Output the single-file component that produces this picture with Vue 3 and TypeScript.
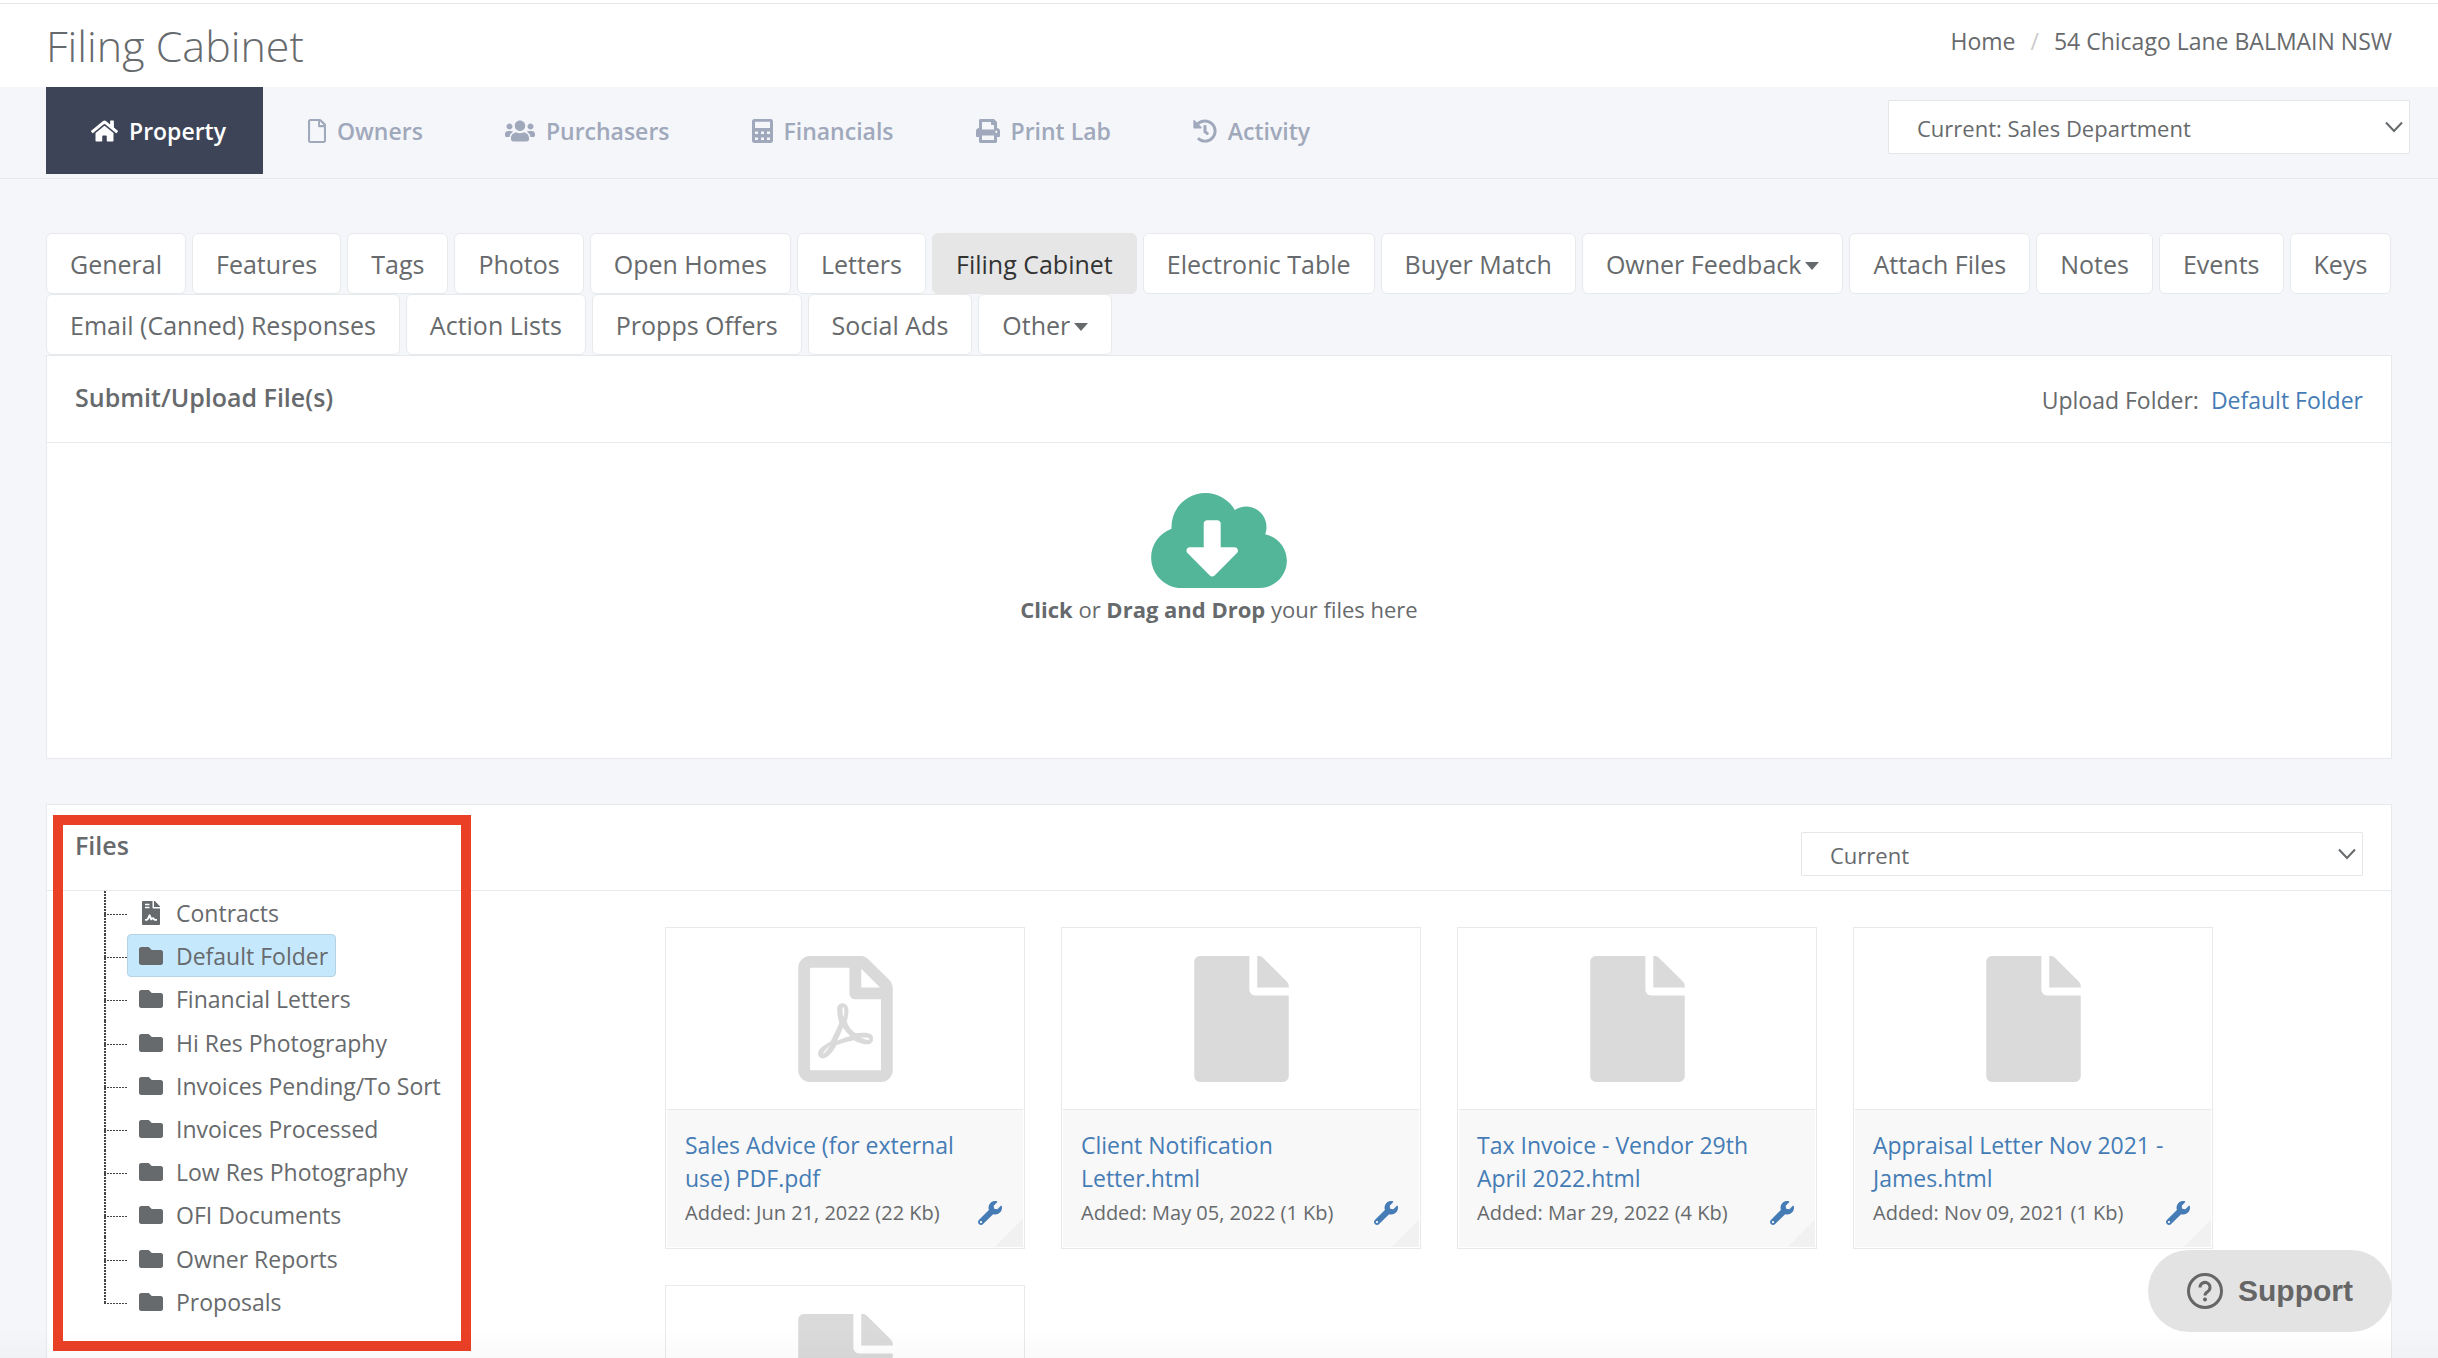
<script setup lang="ts">
import { ref } from 'vue'

interface Icon {
  box: string
  path: string
}

interface NavItem {
  label: string
  icon: string
  width: number
  active?: boolean
}

interface Tab {
  label: string
  active?: boolean
  menu?: boolean
}

interface FileCard {
  name: string
  added: string
  icon: 'pdf' | 'file'
}

const icons: Record<string, Icon> = {
  home: {
    box: '0 0 576 512',
    path: 'M280.37 148.26L96 300.11V464a16 16 0 0 0 16 16l112.06-.29a16 16 0 0 0 15.92-16V368a16 16 0 0 1 16-16h64a16 16 0 0 1 16 16v95.64a16 16 0 0 0 16 16.05L464 480a16 16 0 0 0 16-16V300L295.67 148.26a12.19 12.19 0 0 0-15.3 0zM571.6 251.47L488 182.56V44.05a12 12 0 0 0-12-12h-56a12 12 0 0 0-12 12v72.61L318.47 43a48 48 0 0 0-61 0L4.34 251.47a12 12 0 0 0-1.6 16.9l25.5 31A12 12 0 0 0 45.15 301l235.22-193.74a12.19 12.19 0 0 1 15.3 0L530.9 301a12 12 0 0 0 16.9-1.6l25.5-31a12 12 0 0 0-1.7-16.93z',
  },
  page: {
    box: '0 0 384 512',
    path: 'M369.9 97.9L286 14C277 5 264.8 0 252.1 0H48C21.5 0 0 21.5 0 48v416c0 26.5 21.5 48 48 48h288c26.5 0 48-21.5 48-48V131.9c0-12.7-5.1-25-14.1-34zM332.1 128H256V51.9l76.1 76.1zM44 468V44h172v108c0 13.3 10.7 24 24 24h100v292H44z',
  },
  users: {
    box: '0 0 640 512',
    path: 'M96 224c35.3 0 64-28.7 64-64s-28.7-64-64-64-64 28.7-64 64 28.7 64 64 64zm448 0c35.3 0 64-28.7 64-64s-28.7-64-64-64-64 28.7-64 64 28.7 64 64 64zm32 32h-64c-17.6 0-33.5 7.1-45.1 18.6 40.3 22.1 68.9 62 75.1 109.4h66c17.7 0 32-14.3 32-32v-32c0-35.3-28.7-64-64-64zm-256 0c61.9 0 112-50.1 112-112S381.9 32 320 32 208 82.1 208 144s50.1 112 112 112zm76.8 32h-8.3c-20.8 10-43.9 16-68.5 16s-47.6-6-68.5-16h-8.3C179.6 288 128 339.6 128 403.2V432c0 26.5 21.5 48 48 48h288c26.5 0 48-21.5 48-48v-28.8c0-63.6-51.6-115.2-115.2-115.2zm-223.7-13.4C161.5 263.1 145.6 256 128 256H64c-35.3 0-64 28.7-64 64v32c0 17.7 14.3 32 32 32h65.9c6.3-47.4 34.9-87.3 75.2-109.4z',
  },
  calculator: {
    box: '0 0 448 512',
    path: 'M400 0H48C22 0 0 22 0 48v416c0 26 22 48 48 48h352c26 0 48-22 48-48V48c0-26-22-48-48-48zM64 56h320v136H64zM64 264h64v56H64zM192 264h64v56h-64zM320 264h64v56h-64zM64 392h64v56H64zM192 392h64v56h-64zM320 392h64v56h-64z',
  },
  print: {
    box: '0 0 512 512',
    path: 'M448 192V77.25c0-8.49-3.37-16.62-9.37-22.63L393.37 9.37c-6-6-14.14-9.37-22.63-9.37H96C78.33 0 64 14.33 64 32v160c-35.35 0-64 28.65-64 64v112c0 8.84 7.16 16 16 16h48v96c0 17.67 14.33 32 32 32h320c17.67 0 32-14.33 32-32v-96h48c8.84 0 16-7.16 16-16V256c0-35.35-28.65-64-64-64zm-64 256H128v-96h256v96zm0-224H128V64h192v48c0 8.84 7.16 16 16 16h48v96zm48 72c-13.25 0-24-10.75-24-24 0-13.26 10.75-24 24-24s24 10.74 24 24c0 13.25-10.75 24-24 24z',
  },
  history: {
    box: '0 0 512 512',
    path: 'M504 255.531c.253 136.64-111.18 248.372-247.82 248.468-59.015.042-113.223-20.53-155.822-54.911-11.077-8.94-11.905-25.541-1.839-35.607l11.267-11.267c8.609-8.609 22.353-9.551 31.891-1.984C173.062 425.135 212.781 440 256 440c101.705 0 184-82.311 184-184 0-101.705-82.311-184-184-184-48.814 0-93.149 18.969-126.068 49.932l50.754 50.754c10.08 10.08 2.941 27.314-11.313 27.314H24c-8.837 0-16-7.163-16-16V38.627c0-14.254 17.234-21.393 27.314-11.314l49.372 49.372C129.209 34.136 189.552 8 256 8c136.81 0 247.747 110.78 248 247.531zm-180.912 78.784l9.823-12.63c8.138-10.463 6.253-25.542-4.21-33.679L288 256.349V152c0-13.255-10.745-24-24-24h-16c-13.255 0-24 10.745-24 24v135.651l65.409 50.874c10.463 8.137 25.541 6.253 33.679-4.21z',
  },
  cloud: {
    box: '0 32 640 448',
    path: 'M537.6 226.6c4.1-10.7 6.4-22.4 6.4-34.6 0-53-43-96-96-96-19.7 0-38.1 6-53.3 16.2C367 64.2 315.3 32 256 32c-88.4 0-160 71.6-160 160 0 2.7.1 5.4.2 8.1C40.2 219.8 0 273.2 0 336c0 79.5 64.5 144 144 144h368c70.7 0 128-57.3 128-128 0-61.9-44-113.6-102.4-125.4zm-132.9 88.7L299.3 420.7c-6.2 6.2-16.4 6.2-22.6 0L171.3 315.3c-10.1-10.1-2.9-27.3 11.3-27.3H248V176c0-8.8 7.2-16 16-16h48c8.8 0 16 7.2 16 16v112h65.4c14.2 0 21.4 17.2 11.3 27.3z',
  },
  pdf: {
    box: '0 0 384 512',
    path: 'M369.9 97.9L286 14C277 5 264.8-.1 252.1-.1H48C21.5 0 0 21.5 0 48v416c0 26.5 21.5 48 48 48h288c26.5 0 48-21.5 48-48V131.9c0-12.7-5.1-25-14.1-34zM332.1 128H256V51.9l76.1 76.1zM48 464V48h160v104c0 13.3 10.7 24 24 24h104v288H48zm250.2-143.7c-12.2-12-47-8.7-64.4-6.5-17.2-10.5-28.7-25-36.8-46.3 3.9-16.1 10.1-40.6 5.4-56-4.2-26.2-37.8-23.6-42.6-5.9-4.4 16.1-.4 38.5 7 67.1-10 23.9-24.9 56-35.4 74.4-20 10.3-47 26.2-51 46.2-3.3 15.8 26 55.2 76.1-31.2 22.4-7.4 46.8-16.5 68.4-20.1 18.9 10.2 41 17 55.8 17 25.5 0 28-28.2 17.5-38.7zm-198.1 77.8c5.1-13.7 24.5-29.5 30.4-35-19 30.3-30.4 35.7-30.4 35zm81.6-190.6c7.4 0 6.7 32.1 1.8 40.8-4.4-13.9-4.3-40.8-1.8-40.8zm-24.4 136.6c9.7-16.9 18-37 24.7-54.7 8.3 15.1 18.9 27.2 30.1 35.5-20.8 4.3-38.9 13.1-54.8 19.2zm131.6-5s-5 6-37.3-7.8c35.1-2.6 40.9 5.4 37.3 7.8z',
  },
  file: {
    box: '0 0 384 512',
    path: 'M224 136V0H24C10.7 0 0 10.7 0 24v464c0 13.3 10.7 24 24 24h336c13.3 0 24-10.7 24-24V160H248c-13.2 0-24-10.8-24-24zm160-14.1v6.1H256V0h6.1c6.4 0 12.5 2.5 17 7l97.9 98c4.5 4.5 7 10.6 7 16.9z',
  },
  folder: {
    box: '0 0 512 512',
    path: 'M464 128H272l-64-64H48C21.49 64 0 85.49 0 112v288c0 26.51 21.49 48 48 48h416c26.51 0 48-21.49 48-48V176c0-26.51-21.49-48-48-48z',
  },
  contract: {
    box: '-64 0 512 512',
    path: 'M224 136V0H24C10.7 0 0 10.7 0 24v464c0 13.3 10.7 24 24 24h336c13.3 0 24-10.7 24-24V160H248c-13.2 0-24-10.8-24-24zM64 60h96v32H64zM64 124h96v32H64zM64 384h24c10 0 18-6 22-15l34-76c7-15 28-15 34 0l30 66c12-18 40-18 52 0l8 13c5 8 12 12 20 12h32v36h-40c-18 0-34-8-44-22l-10-14-12 19c-8 13-27 12-33-2l-20-45-16 34c-8 18-26 30-47 30H64zM384 121.9v6.1H256V0h6.1c6.4 0 12.5 2.5 17 7l97.9 98c4.5 4.5 7 10.6 7 16.9z',
  },
  wrench: {
    box: '0 0 512 512',
    path: 'M507.73 109.1c-2.24-9.03-13.54-12.09-20.12-5.51l-74.36 74.36-67.88-11.31-11.31-67.88 74.36-74.36c6.62-6.62 3.43-17.9-5.66-20.16-47.38-11.74-99.55.91-136.58 37.93-39.64 39.64-50.55 97.1-34.05 147.2L18.74 402.76c-24.99 24.99-24.99 65.51 0 90.5 24.99 24.99 65.51 24.99 90.5 0l213.21-213.21c50.12 16.71 107.47 5.68 147.37-34.22 37.07-37.07 49.7-89.32 37.91-136.73zM64 472c-13.25 0-24-10.75-24-24 0-13.26 10.75-24 24-24s24 10.74 24 24c0 13.25-10.75 24-24 24z',
  },
}

const navItems: NavItem[] = [
  { label: 'Property', icon: 'home', width: 27, active: true },
  { label: 'Owners', icon: 'page', width: 18 },
  { label: 'Purchasers', icon: 'users', width: 30 },
  { label: 'Financials', icon: 'calculator', width: 21 },
  { label: 'Print Lab', icon: 'print', width: 24 },
  { label: 'Activity', icon: 'history', width: 24 },
]

const tabs: Tab[] = [
  { label: 'General' },
  { label: 'Features' },
  { label: 'Tags' },
  { label: 'Photos' },
  { label: 'Open Homes' },
  { label: 'Letters' },
  { label: 'Filing Cabinet', active: true },
  { label: 'Electronic Table' },
  { label: 'Buyer Match' },
  { label: 'Owner Feedback', menu: true },
  { label: 'Attach Files' },
  { label: 'Notes' },
  { label: 'Events' },
  { label: 'Keys' },
  { label: 'Email (Canned) Responses' },
  { label: 'Action Lists' },
  { label: 'Propps Offers' },
  { label: 'Social Ads' },
  { label: 'Other', menu: true },
]

const folders: string[] = [
  'Contracts',
  'Default Folder',
  'Financial Letters',
  'Hi Res Photography',
  'Invoices Pending/To Sort',
  'Invoices Processed',
  'Low Res Photography',
  'OFI Documents',
  'Owner Reports',
  'Proposals',
]

const files: FileCard[] = [
  { name: 'Sales Advice (for external use) PDF.pdf', added: 'Added: Jun 21, 2022 (22 Kb)', icon: 'pdf' },
  { name: 'Client Notification Letter.html', added: 'Added: May 05, 2022 (1 Kb)', icon: 'file' },
  { name: 'Tax Invoice - Vendor 29th April 2022.html', added: 'Added: Mar 29, 2022 (4 Kb)', icon: 'file' },
  { name: 'Appraisal Letter Nov 2021 - James.html', added: 'Added: Nov 09, 2021 (1 Kb)', icon: 'file' },
  { name: '', added: '', icon: 'file' },
]

const selectedFolder = ref('Default Folder')
const department = ref('Current: Sales Department')
const period = ref('Current')
</script>

<template>
  <div class="page">
    <header class="heading">
      <h1>Filing Cabinet</h1>
      <nav class="breadcrumb" aria-label="Breadcrumb">
        <a href="#">Home</a>
        <span class="slash">/</span>
        <a href="#">54 Chicago Lane BALMAIN NSW</a>
      </nav>
    </header>

    <div class="navbar">
      <nav class="sections" aria-label="Sections">
        <a v-for="item in navItems" :key="item.label" href="#" :class="{ active: item.active }">
          <svg :viewBox="icons[item.icon].box" :width="item.width" height="24" aria-hidden="true">
            <path :d="icons[item.icon].path" fill="currentColor" fill-rule="evenodd" />
          </svg>
          <span>{{ item.label }}</span>
        </a>
      </nav>
      <div class="select department">
        <select v-model="department" aria-label="Department">
          <option>Current: Sales Department</option>
        </select>
        <svg class="chevron" viewBox="0 0 18 12" width="18" height="12" aria-hidden="true">
          <path d="M1 1.5l8 8.500 8-8.500" fill="none" stroke="currentColor" stroke-width="2" />
        </svg>
      </div>
    </div>

    <main>
      <div class="tabs">
        <button v-for="tab in tabs" :key="tab.label" type="button" :class="{ active: tab.active }">
          {{ tab.label }}<span v-if="tab.menu" class="caret"></span>
        </button>
      </div>

      <section class="panel upload">
        <div class="panel-head">
          <h2>Submit/Upload File(s)</h2>
          <p>Upload Folder: <a href="#">Default Folder</a></p>
        </div>
        <div class="dropzone">
          <svg :viewBox="icons.cloud.box" width="136" height="95" aria-hidden="true">
            <path :d="icons.cloud.path" fill="currentColor" />
          </svg>
          <p><strong>Click</strong> or <strong>Drag and Drop</strong> your files here</p>
        </div>
      </section>

      <section class="panel files">
        <div class="panel-head">
          <h2>Files</h2>
          <div class="select period">
            <select v-model="period" aria-label="Period">
              <option>Current</option>
            </select>
            <svg class="chevron" viewBox="0 0 18 12" width="18" height="12" aria-hidden="true">
              <path d="M1 1.500l8 8.500 8-8.500" fill="none" stroke="currentColor" stroke-width="2" />
            </svg>
          </div>
        </div>
        <div class="panel-body">
          <ul class="tree">
            <li v-for="name in folders" :key="name">
              <button type="button" :class="{ selected: name === selectedFolder }" @click="selectedFolder = name">
                <svg :viewBox="icons[name === 'Contracts' ? 'contract' : 'folder'].box" width="24" height="24" aria-hidden="true">
                  <path
                    :d="icons[name === 'Contracts' ? 'contract' : 'folder'].path"
                    fill="currentColor"
                    fill-rule="evenodd"
                  />
                </svg>
                <span>{{ name }}</span>
              </button>
            </li>
          </ul>
          <div class="cards">
            <article v-for="file in files" :key="file.name" class="card">
              <div class="preview">
                <svg :viewBox="icons[file.icon].box" width="95" height="126" aria-hidden="true">
                  <path :d="icons[file.icon].path" fill="currentColor" />
                </svg>
              </div>
              <div class="details">
                <a href="#" class="name">{{ file.name }}</a>
                <div class="meta">
                  <span>{{ file.added }}</span>
                  <a href="#" aria-label="File options">
                    <svg :viewBox="icons.wrench.box" width="24" height="24" aria-hidden="true">
                      <path :d="icons.wrench.path" fill="currentColor" fill-rule="evenodd" />
                    </svg>
                  </a>
                </div>
              </div>
            </article>
          </div>
        </div>
        <div class="marker"></div>
      </section>
    </main>

    <div class="fade"></div>
    <button type="button" class="support">
      <svg viewBox="0 0 36 36" width="36" height="36" aria-hidden="true">
        <circle cx="18" cy="18" r="16.500" fill="none" stroke="currentColor" stroke-width="3" />
        <path
          d="M13 14.500a5 5 0 1 1 7.600 4.200c-1.700 1-2.600 1.900-2.600 3.800"
          fill="none"
          stroke="currentColor"
          stroke-width="3"
        />
        <circle cx="18" cy="26.500" r="2" fill="currentColor" />
      </svg>
      <span>Support</span>
    </button>
  </div>
</template>

<style>
body {
  margin: 0;
  background: #f4f6fa;
}
</style>

<style scoped>
* {
  box-sizing: border-box;
}

.page {
  height: 100vh;
  overflow: hidden;
  background: #f4f6fa;
  color: #676a6c;
  font-family: 'Open Sans', sans-serif;
  font-size: 23px;
  line-height: 33px;
}

h1,
h2,
p,
ul {
  margin: 0;
  padding: 0;
}

a {
  color: #457cb5;
  text-decoration: none;
}

button,
select {
  color: inherit;
  font-family: inherit;
}

svg {
  display: block;
  flex: none;
}

.heading {
  display: flex;
  justify-content: space-between;
  height: 87px;
  margin: 0;
  padding: 22px 46px 0;
  background: linear-gradient(#e7eaec, #e7eaec) 0 3px / 100% 1px no-repeat #fff;
}

h1 {
  font-size: 43px;
  font-weight: 300;
  line-height: 48px;
}

.breadcrumb {
  display: flex;
  padding-top: 3px;
}

.breadcrumb a {
  color: #676a6c;
}

.slash {
  padding: 0 15px;
  color: #ccc;
}

.navbar {
  display: flex;
  justify-content: space-between;
  height: 92px;
  padding: 0 28px 0 46px;
  border-bottom: 1px solid #e7eaec;
}

.sections {
  display: flex;
}

.sections a {
  display: flex;
  align-items: center;
  gap: 11px;
  height: 87px;
  padding: 1px 37px 0 45px;
  color: #a0a8bb;
  font-weight: 600;
}

.sections a.active {
  background: #3d4457;
  color: #fff;
}

.select {
  position: relative;
}

.select select {
  width: 100%;
  height: 100%;
  padding: 2px 40px 0 28px;
  border: 1px solid #e5e6e7;
  border-radius: 1px;
  appearance: none;
  background: #fff;
  font-size: 22px;
}

.chevron {
  position: absolute;
  top: 50%;
  right: 7px;
  margin-top: -6px;
  pointer-events: none;
}

.department {
  width: 522px;
  height: 54px;
  margin-top: 13px;
}

main {
  padding: 54px 46px 0;
}

.tabs {
  display: flex;
  flex-wrap: wrap;
  column-gap: 6px;
}

.tabs button {
  display: flex;
  align-items: center;
  height: 61px;
  padding: 0 23px;
  border: 1px solid #e7eaec;
  border-radius: 6px;
  background: #fff;
  font-size: 25px;
}

.tabs button.active {
  border-color: #e6e6e6;
  background: #e6e6e6;
  color: #333;
}

.caret {
  margin: 4px 0 0 4px;
  border: 7px solid transparent;
  border-top: 8px solid currentColor;
  border-bottom: 0;
}

.panel {
  position: relative;
  border: 1px solid #e7eaec;
  background: #fff;
}

.panel-head {
  display: flex;
  justify-content: space-between;
  height: 87px;
  padding: 25px 28px 0;
  border-bottom: 1px solid #e7eaec;
}

h2 {
  font-size: 25px;
  font-weight: 600;
  line-height: 33px;
}

.panel-head p {
  padding-top: 3px;
}

.panel-head p a {
  margin-left: 6px;
}

.dropzone {
  display: flex;
  flex-direction: column;
  align-items: center;
  gap: 5px;
  height: 315px;
  padding-top: 50px;
  color: #53b699;
}

.dropzone p {
  color: #676a6c;
  font-size: 22px;
}

.files {
  margin-top: 45px;
}

.files .panel-head {
  height: 86px;
  padding-top: 24px;
}

.period {
  width: 562px;
  height: 44px;
  margin-top: 3px;
}

.panel-body {
  display: flex;
  align-items: flex-start;
}

.tree {
  display: grid;
  flex: 0 0 618px;
  grid-auto-rows: 1fr;
  height: 432px;
  padding-left: 57px;
  list-style: none;
}

.tree li {
  display: flex;
  padding-left: 23px;
  background:
    repeating-linear-gradient(#444 0 2px, transparent 2px 3px) 0 0 / 2px 100% no-repeat,
    repeating-linear-gradient(90deg, #444 0 2px, transparent 2px 3px) 0 23px / 23px 1px no-repeat;
}

.tree li:last-child {
  background-size: 2px 24px, 23px 1px;
}

.tree button {
  display: flex;
  align-items: center;
  gap: 13px;
  padding: 1px 7px 0 11px;
  border: 1px solid transparent;
  border-radius: 4px;
  background: none;
  font-size: 23px;
}

.tree button.selected {
  border-color: #b5d3e2;
  background: #c5e8fc;
}

.cards {
  display: flex;
  flex: 1;
  flex-wrap: wrap;
  gap: 36px;
  padding-top: 36px;
}

.card {
  width: 360px;
  height: 322px;
  padding: 1px;
  border: 1px solid #e7eaec;
  background: #fff;
}

.preview {
  display: flex;
  align-items: center;
  justify-content: center;
  height: 180px;
  color: #dadada;
}

.details {
  height: 138px;
  padding: 19px 21px 0 18px;
  border-top: 1px solid #e7eaec;
  background: linear-gradient(135deg, transparent 50%, #f1f1f1 50%) right bottom / 28px 28px no-repeat #f8f8f8;
}

.name {
  display: block;
  min-height: 66px;
  padding-right: 10px;
}

.meta {
  display: flex;
  align-items: center;
  justify-content: space-between;
  height: 35px;
  font-size: 20px;
}

.marker {
  position: absolute;
  top: 10px;
  left: 6px;
  width: 418px;
  height: 536px;
  border: 10px solid #ea4026;
  pointer-events: none;
}

.fade {
  position: fixed;
  right: 0;
  bottom: 0;
  left: 0;
  height: 28px;
  background: linear-gradient(transparent, rgba(0, 0, 0, 0.02));
  pointer-events: none;
}

.support {
  position: fixed;
  right: 46px;
  bottom: 26px;
  display: flex;
  align-items: center;
  gap: 15px;
  height: 82px;
  padding: 0 39px;
  border: 0;
  border-radius: 41px;
  background: #e3e3e3;
  color: #666;
  font-family: 'Liberation Sans', Arial, sans-serif;
  font-size: 30px;
  font-weight: 700;
}
</style>
